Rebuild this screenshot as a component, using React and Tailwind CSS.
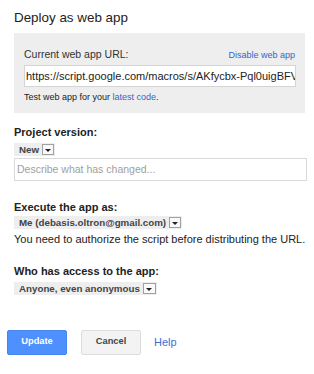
import React from 'react';

const Select = ({ label, arrowW = 'w-[12px]' }) => (
  <div className="inline-flex items-center h-[13px] bg-[#eeeeee] pl-[5px] pr-[1px] gap-[3px]">
    <span className="text-[9.75px] font-bold text-[#444] leading-[13px] whitespace-nowrap">{label}</span>
    <div className={`${arrowW} h-[11px] border border-[#a0a0a0] bg-[#f9f9f9] flex items-center justify-center pt-[2px]`}>
      <div className="w-0 h-0 border-x-[3px] border-x-transparent border-t-[3px] border-t-[#222]" />
    </div>
  </div>
);

const App = () => {
  return (
    <div className="w-[314px] h-[374px] bg-white px-[14px] font-['Liberation_Sans',Arial,sans-serif] text-[#222] overflow-hidden">
      <h1 className="pt-[8px] text-[13.4px] leading-[20px] font-normal">Deploy as web app</h1>

      <div className="mt-[5px] w-[291px] h-[80px] bg-[#eeeeee] px-[10px] pt-[15px]">
        <div className="flex items-baseline justify-between leading-[12px]">
          <span className="text-[10.5px] text-[#333]">Current web app URL:</span>
          <a className="text-[9px] text-[#3366cc]">Disable web app</a>
        </div>
        <input
          readOnly
          value="https://script.google.com/macros/s/AKfycbx-Pql0uigBFV"
          className="mt-[4px] w-[272px] h-[22px] border border-[#d4d4d4] bg-white pl-[1px] text-[11px] text-[#222] outline-none"
        />
        <div className="mt-[5px] text-[9px] leading-[11px] text-[#222]">
          Test web app for your <a className="text-[#3366cc]">latest code</a>.
        </div>
      </div>

      <div className="mt-[13px] text-[11px] leading-[13px] font-bold">Project version:</div>
      <div className="mt-[4px] flex">
        <Select label="New" />
      </div>
      <input
        placeholder="Describe what has changed..."
        className="w-[293px] h-[23px] border border-[#d9d9d9] bg-white pl-[2px] text-[10.5px] placeholder:text-[#a0a0a0] outline-none"
      />

      <div className="mt-[20px] text-[11px] leading-[13px] font-bold">Execute the app as:</div>
      <div className="mt-[2px] flex">
        <Select label="Me (debasis.oltron@gmail.com)" />
      </div>
      <div className="mt-[4px] text-[11px] leading-[13px] text-[#222] whitespace-nowrap">
        You need to authorize the script before distributing the URL.
      </div>

      <div className="mt-[19px] text-[11px] leading-[13px] font-bold">Who has access to the app:</div>
      <div className="mt-[4px] flex">
        <Select label="Anyone, even anonymous" arrowW="w-[13px]" />
      </div>

      <div className="mt-[35px] -ml-[7px] flex items-center">
        <button className="w-[60px] h-[25px] bg-[#4d90fe] border border-[#4787ed] rounded-[2px] text-white text-[9.3px] font-bold">
          Update
        </button>
        <button className="ml-[14px] w-[60px] h-[25px] bg-[#f3f3f3] border border-[#dcdcdc] rounded-[2px] text-[#444] text-[9.3px] font-bold">
          Cancel
        </button>
        <a className="ml-[13px] text-[11px] text-[#3b6fd4]">Help</a>
      </div>
    </div>
  );
};

export default App;
